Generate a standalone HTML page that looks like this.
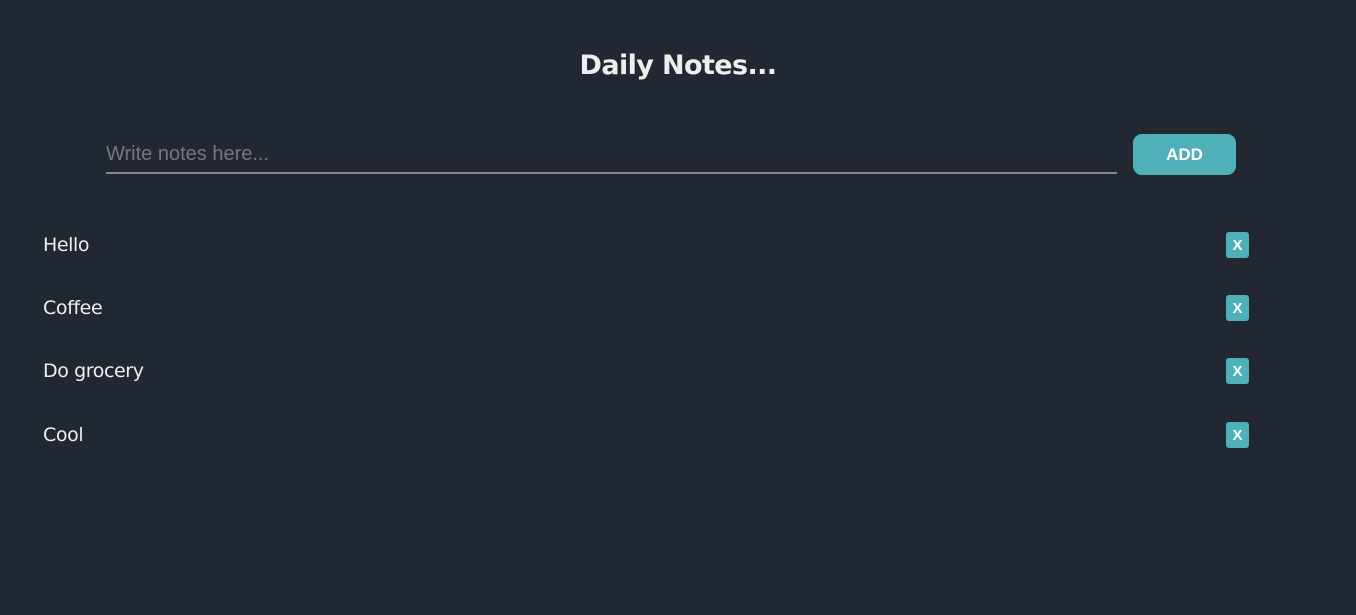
<!DOCTYPE html>
<html><head><style>
body{margin:0;background:#222831;width:1356px;height:615px;overflow:hidden;font-family:"DejaVu Sans","Liberation Sans",sans-serif;color:#eeeeee}
h1{position:absolute;top:50px;left:0;width:1356px;text-align:center;margin:0;font-size:27px;font-weight:bold;letter-spacing:-0.6px}
.inp{position:absolute;left:106px;top:139px;width:1011px;height:33px;border-bottom:2px solid #888;font-family:"Liberation Sans",sans-serif;font-size:20px;color:#777;line-height:30px}
.add{position:absolute;left:1133px;top:134px;width:103px;height:41px;background:#4fb0b9;border-radius:9px;color:#fff;font-family:"Liberation Sans",sans-serif;font-weight:bold;font-size:17px;text-align:center;line-height:41px}
.n{position:absolute;left:43px;font-size:19px;letter-spacing:-0.4px}
.x{position:absolute;left:1226px;width:23px;height:26px;background:#4fb0b9;border-radius:3px;color:#fff;font-family:"Liberation Sans",sans-serif;font-weight:bold;font-size:15px;text-align:center;line-height:27px}
</style></head><body>
<h1>Daily Notes...</h1>
<div class="inp">Write notes here...</div>
<div class="add">ADD</div>
<div class="n" style="top:234px">Hello</div><div class="x" style="top:232px">X</div>
<div class="n" style="top:297px">Coffee</div><div class="x" style="top:295px">X</div>
<div class="n" style="top:360px">Do grocery</div><div class="x" style="top:358px">X</div>
<div class="n" style="top:424px">Cool</div><div class="x" style="top:422px">X</div>
</body></html>
